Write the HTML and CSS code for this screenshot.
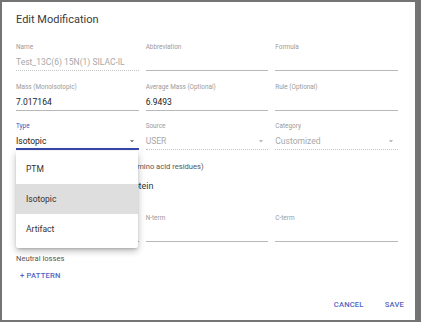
FILE: index.html
```html
<!DOCTYPE html>
<html lang="en">
<head>
    <meta charset="UTF-8">
    <meta name="viewport" content="width=device-width, initial-scale=1.0">
    <title>Edit Modification</title>
    <link rel="stylesheet" href="styles.css">
</head>
<body>
    <div class="dialog">
        <h2 class="title">Edit Modification</h2>

        <div class="row">
            <div class="field">
                <label>Name</label>
                <div class="value disabled">Test_13C(6) 15N(1) SILAC-IL</div>
            </div>
            <div class="field">
                <label>Abbreviation</label>
                <div class="value"></div>
            </div>
            <div class="field">
                <label>Formula</label>
                <div class="value"></div>
            </div>
        </div>

        <div class="row">
            <div class="field">
                <label>Mass (Monoisotopic)</label>
                <div class="value">7.017164</div>
            </div>
            <div class="field">
                <label>Average Mass (Optional)</label>
                <div class="value">6.9493</div>
            </div>
            <div class="field">
                <label>Rule (Optional)</label>
                <div class="value"></div>
            </div>
        </div>

        <div class="row">
            <div class="field focused">
                <label>Type</label>
                <div class="value select">
                    <span>Isotopic</span>
                    <svg class="arrow" viewBox="0 0 24 24"><path d="M7 10l5 5 5-5z"/></svg>
                </div>
            </div>
            <div class="field">
                <label>Source</label>
                <div class="value select disabled">
                    <span>USER</span>
                    <svg class="arrow" viewBox="0 0 24 24"><path d="M7 10l5 5 5-5z"/></svg>
                </div>
            </div>
            <div class="field">
                <label>Category</label>
                <div class="value select disabled">
                    <span>Customized</span>
                    <svg class="arrow" viewBox="0 0 24 24"><path d="M7 10l5 5 5-5z"/></svg>
                </div>
            </div>
        </div>

        <div class="spec-label">Modification sites (any of the amino acid residues)</div>
        <div class="spec-value">Apply anywhere within the protein</div>

        <div class="row terms">
            <div class="field">
                <label>Residues</label>
                <div class="value"></div>
            </div>
            <div class="field">
                <label>N-term</label>
                <div class="value"></div>
            </div>
            <div class="field">
                <label>C-term</label>
                <div class="value"></div>
            </div>
        </div>

        <div class="section-label">Neutral losses</div>
        <div class="pattern-row">
            <button class="text-button">+ Pattern</button>
        </div>

        <div class="actions">
            <button class="text-button">Cancel</button>
            <button class="text-button">Save</button>
        </div>

        <ul class="menu">
            <li>PTM</li>
            <li class="selected">Isotopic</li>
            <li>Artifact</li>
        </ul>
    </div>
</body>
</html>
```

FILE: styles.css
```css
body {
    margin: 0;
    background-color: #747474;
    font-family: Roboto, "Noto Sans", Arial, sans-serif;
    color: #222;
}
.dialog {
    position: relative;
    display: flex;
    flex-direction: column;
    margin: 2px 6px 2px 2px;
    height: 318px;
    padding: 0 17px 0 14px;
    background-color: #fff;
    box-sizing: border-box;
}
.title {
    margin: 11px 0 16px;
    font-size: 11px;
    line-height: 14px;
    font-weight: 400;
    color: #3a3a3a;
}
.row {
    display: grid;
    grid-template-columns: repeat(3, 1fr);
    column-gap: 7px;
    margin-bottom: 11.5px;
}
.field label {
    display: block;
    font-size: 6.4px;
    line-height: 8px;
    color: #9a9a9a;
}
.field .value {
    margin-top: 5px;
    height: 12px;
    padding-bottom: 2px;
    font-size: 8.5px;
    line-height: 12px;
    color: #222;
    border-bottom: 1px solid #b8b8b8;
    white-space: nowrap;
}
.field .value.disabled {
    color: #a8a8a8;
    border-bottom: 1px dotted #c4c4c4;
}
.field.focused label {
    color: #3f51b5;
}
.field.focused .value {
    padding-bottom: 1px;
    border-bottom: 2px solid #3949ab;
}
.select {
    display: flex;
    justify-content: space-between;
    align-items: center;
}
.arrow {
    width: 10px;
    height: 10px;
    margin-right: 2px;
    fill: #666;
}
.disabled .arrow {
    fill: #aaa;
}
.spec-label {
    padding-left: 17px;
    font-size: 7.6px;
    line-height: 10px;
    color: #555;
    white-space: nowrap;
}
.spec-value {
    margin-top: 8px;
    padding-left: 3px;
    font-size: 9px;
    line-height: 12px;
    color: #333;
    white-space: nowrap;
}
.row.terms {
    margin-top: 22px;
    margin-bottom: 0;
}
.section-label {
    margin-top: 12px;
    font-size: 7.6px;
    line-height: 10px;
    color: #555;
}
.pattern-row {
    display: flex;
    margin-top: 4px;
}
.text-button {
    padding: 3px 4px;
    border: none;
    background: none;
    font-family: Roboto, "Noto Sans", Arial, sans-serif;
    font-size: 7.6px;
    line-height: 10px;
    font-weight: 500;
    letter-spacing: 0.2px;
    text-transform: uppercase;
    color: #5364c4;
    cursor: pointer;
}
.actions {
    display: flex;
    justify-content: flex-end;
    gap: 13px;
    margin-top: auto;
    margin-right: -10px;
    padding-bottom: 7px;
}
.menu {
    position: absolute;
    left: 14px;
    top: 149px;
    width: 122px;
    margin: 0;
    padding: 3px 0 4px;
    list-style: none;
    background-color: #fff;
    border-radius: 2px;
    box-shadow: 0 2px 3px -1px rgba(0, 0, 0, 0.2), 0 4px 6px rgba(0, 0, 0, 0.14), 0 1px 10px rgba(0, 0, 0, 0.12);
}
.menu li {
    height: 30px;
    padding-left: 10px;
    font-size: 8.5px;
    line-height: 30px;
    color: #333;
}
.menu li.selected {
    background-color: #dedede;
}
```
